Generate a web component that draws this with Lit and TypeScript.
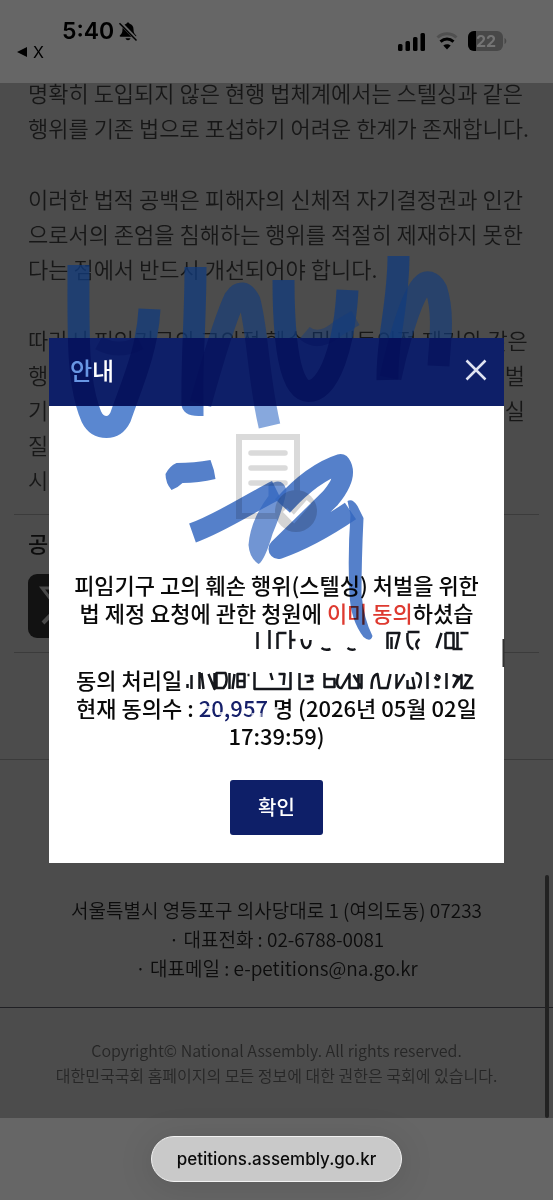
import { LitElement, html, svg, css } from "lit";
import { customElement } from "lit/decorators.js";

const ICON_BELL = svg`
  <path d="M10 1.500c-.9 0-1.500.6-1.500 1.300C5.800 3.500 4.500 5.500 4.500 8.200c0 3.300-1 4.600-2.500 6-.6.600-.3 1.500.6 1.500h14.800c.9 0 1.200-.9.600-1.500-1.500-1.400-2.500-2.700-2.500-6 0-2.700-1.300-4.700-4-5.400 0-.7-.6-1.300-1.500-1.300z"/>
  <path d="M7.500 17.200h5c-.3 1.300-1.300 2-2.500 2s-2.200-.7-2.500-2z"/>
  <path d="M2 1.500 19 19" stroke="#666" stroke-width="3.600"/>
  <path d="M1.500 2.200 18.500 19.500" stroke="#000" stroke-width="1.500"/>`;

@customElement("status-bar")
class StatusBar extends LitElement {
  static styles = css`
    :host {
      display: flex;
      justify-content: space-between;
      height: 83px;
      box-sizing: border-box;
      padding: 17px 45px 0 17px;
      background: #666;
      color: #000;
      font-family: Inter, "Noto Sans", sans-serif;
    }
    .clock {
      display: flex;
      align-items: center;
      gap: 4px;
      padding-left: 45px;
      font-size: 23px;
      line-height: 28px;
      font-weight: 600;
    }
    .back {
      display: flex;
      align-items: center;
      gap: 6px;
      font-size: 16px;
      line-height: 14px;
      color: inherit;
      text-decoration: none;
    }
    .right {
      display: flex;
      align-items: center;
      gap: 10px;
      height: 48px;
    }
  `;
  render() {
    return html`
      <div>
        <div class="clock">
          <span>5:40</span>
          <svg width="20" height="21" viewBox="0 0 20 21" aria-label="무음">${ICON_BELL}</svg>
        </div>
        <a class="back" href="#">
          <svg width="10" height="10" viewBox="0 0 10 10"><path d="M0 5 10 0v10z" /></svg>
          <span>X</span>
        </a>
      </div>
      <div class="right">
        <svg width="28" height="19" viewBox="0 0 28 19">
          <rect x="0" y="12" width="4.500" height="7" rx="1.500" />
          <rect x="7.500" y="9" width="4.500" height="10" rx="1.500" />
          <rect x="15" y="5" width="4.500" height="14" rx="1.500" />
          <rect x="22.500" y="1" width="4.500" height="18" rx="1.500" />
        </svg>
        <svg width="22" height="18" viewBox="0 0 22 18" fill="none">
          <path d="M1.500 5.500C7 .5 15 .5 20.500 5.500" stroke="#505050" stroke-width="3" />
          <path d="M4.500 9.700c4-3.500 9-3.500 13 0" stroke="#000" stroke-width="3" />
          <path d="M11 17.500 7.300 13.600c2.200-1.900 5.200-1.900 7.400 0z" fill="#000" />
        </svg>
        <svg width="40" height="20" viewBox="0 0 40 20">
          <rect width="35" height="20" rx="6" fill="#484848" />
          <path d="M8 0H6a6 6 0 0 0-6 6v8a6 6 0 0 0 6 6h2z" />
          <path d="M36.500 7c2.400 1 2.400 5 0 6z" fill="#484848" />
          <text x="18" y="16" font-size="16" font-weight="700" fill="#747474" text-anchor="middle">22</text>
        </svg>
      </div>
    `;
  }
}

@customElement("petition-page")
class PetitionPage extends LitElement {
  static styles = css`
    :host {
      display: block;
      overflow: hidden;
      background: #4c4c4c;
      color: #171717;
      font-weight: 350;
    }
    .article {
      margin: -8px 14px 0;
      padding: 0 14px 17px;
      border-bottom: 1px solid #3b3b3b;
      font-size: 22px;
      line-height: 35px;
      white-space: nowrap;
    }
    p {
      margin: 0 0 36px;
    }
    p:last-child {
      margin: 0;
    }
    .line {
      display: flex;
      justify-content: space-between;
    }
    .share {
      margin: 0 14px;
      padding: 11px 14px 14px;
      border-bottom: 1px solid #3b3b3b;
    }
    h2 {
      margin: 0 0 16px;
      font-size: 22px;
      line-height: 32px;
      font-weight: 500;
      color: #0c0c0c;
    }
    .x {
      display: block;
      width: 64px;
      height: 64px;
      padding: 0;
      border: 0;
      border-radius: 9px;
      background: #121212;
    }
    .contact {
      margin-top: 106px;
      padding: 135px 0 25px;
      border-top: 1px solid #3b3b3b;
      border-bottom: 1px solid #202024;
      font-size: 19px;
      line-height: 29px;
      text-align: center;
      color: #0c0c0c;
      font-style: normal;
    }
    .contact a {
      color: inherit;
      text-decoration: none;
    }
    .copy {
      padding: 30px 0;
      font-size: 16px;
      line-height: 25px;
      text-align: center;
      color: #262626;
    }
  `;
  render() {
    return html`
      <article class="article">
        <p>명확히 도입되지 않은 현행 법체계에서는 스텔싱과 같은<br />행위를 기존 법으로 포섭하기 어려운 한계가 존재합니다.</p>
        <p>이러한 법적 공백은 피해자의 신체적 자기결정권과 인간<br />으로서의 존엄을 침해하는 행위를 적절히 제재하지 못한<br />다는 점에서 반드시 개선되어야 합니다.</p>
        <p>
          따라서 피임기구의 고의적 훼손 및 비동의적 제거와 같은
          <span class="line"><span>행</span><span>벌</span></span>
          <span class="line"><span>기</span><span>실</span></span>
          <span class="line">질</span>
          <span class="line">시</span>
        </p>
      </article>
      <section class="share">
        <h2>공</h2>
        <button class="x" aria-label="X">
          <svg width="64" height="64" viewBox="0 0 64 64" fill="none" stroke="#4a4a4a">
            <path d="M14 14h9l27 35h-9z" stroke-width="3" />
            <path d="M49 14 15 49" stroke-width="4" />
          </svg>
        </button>
      </section>
      <address class="contact">
        서울특별시 영등포구 의사당대로 1 (여의도동) 07233<br />
        · 대표전화 : 02-6788-0081<br />
        · 대표메일 : <a href="mailto:e-petitions@na.go.kr">e-petitions@na.go.kr</a>
      </address>
      <div class="copy">
        Copyright© National Assembly. All rights reserved.<br />
        대한민국국회 홈페이지의 모든 정보에 대한 권한은 국회에 있습니다.
      </div>
    `;
  }
}

@customElement("notice-dialog")
class NoticeDialog extends LitElement {
  static styles = css`
    :host {
      display: block;
      background: #fff;
      color: #0a0a0a;
    }
    header {
      display: flex;
      align-items: center;
      justify-content: space-between;
      box-sizing: border-box;
      height: 68px;
      padding: 0 17px 3px 21px;
      background: #0e1f68;
      color: #fff;
    }
    h1 {
      margin: 0;
      font-size: 24px;
      line-height: 32px;
      font-weight: 500;
    }
    button {
      font: inherit;
      border: 0;
      padding: 0;
    }
    .close {
      display: grid;
      background: none;
    }
    .body {
      display: flex;
      flex-direction: column;
      align-items: center;
      padding: 28px 0;
      font-size: 22px;
      line-height: 28px;
      font-weight: 500;
      text-align: center;
      white-space: nowrap;
    }
    .doc {
      margin-bottom: 36px;
    }
    p {
      margin: 0;
    }
    .dates {
      margin: 39px 0 31px;
    }
    .left {
      display: block;
      text-align: left;
    }
    em {
      font-style: normal;
      color: #de3a30;
    }
    .count {
      color: #16206a;
    }
    .ok {
      width: 93px;
      height: 55px;
      border-radius: 3px;
      background: #0e1f68;
      color: #fff;
      font-size: 20px;
    }
  `;
  render() {
    return html`
      <header>
        <h1>안내</h1>
        <button class="close" aria-label="닫기">
          <svg width="22" height="22" viewBox="0 0 22 22" stroke="#dfe3f2" stroke-width="2.500">
            <path d="M1.500 1.500l19 19M20.500 1.500l-19 19" />
          </svg>
        </button>
      </header>
      <div class="body">
        <svg class="doc" width="82" height="100" viewBox="0 0 82 100" fill="none" stroke="#dadada">
          <path d="M61 57V3H3v79h38" stroke-width="6" />
          <path d="M15 19h34M15 34h34M15 49h34" stroke-width="5.500" stroke-linecap="round" />
          <circle cx="60" cy="77" r="21" fill="#d4d4d4" stroke="none" />
          <path d="M49 76l9 9 15-17" stroke="#fff" stroke-width="6" />
        </svg>
        <p>피임기구 고의 훼손 행위(스텔싱) 처벌을 위한<br />법 제정 요청에 관한 청원에 <em>이미 동의</em>하셨습</p>
        <p class="dates">
          <span class="left">동의 처리일</span>
          현재 동의수 : <span class="count">20,957</span> 명 (2026년 05월 02일<br />17:39:59)
        </p>
        <button class="ok">확인</button>
      </div>
    `;
  }
}

/* Freehand marker strokes and smudged lines laid over the whole screen. */
@customElement("marker-layer")
class MarkerLayer extends LitElement {
  static styles = css`
    :host {
      display: contents;
    }
    svg {
      position: absolute;
      top: 0;
      left: 50%;
      transform: translateX(-50%);
      pointer-events: none;
      fill: none;
      stroke-linejoin: round;
    }
    .ink {
      mix-blend-mode: multiply;
    }
  `;
  render() {
    const upper = svg`
      <path d="M78 265C78 330 76 382 91 417Q96 427 106 427Q115 427 120 417C131 385 147 350 149 309"/>
      <path d="M98 343Q118 354 140 343" stroke-width="14" opacity=".5"/>
      <path d="M195 267C195 320 191 360 192 404Q193 405 203 405"/>
      <path d="M200 404C210 368 222 325 234 299Q242 287 249 301C257 330 258 380 269 426" stroke-opacity=".62"/>
      <path d="M283 280C283 340 289 391 308 391C329 391 344 345 347 290"/>
      <path d="M304 333Q318 345 338 328L355 318" stroke-width="16" opacity=".6"/>
      <path d="M398 256C398 305 386 340 387 380"/>
      <path d="M390 378C397 345 410 299 421 286Q429 277 436 290C444 315 439 345 438 366" stroke-opacity=".62"/>`;
    return html`
      <svg width="553" height="1200" viewBox="0 0 553 1200">
        <defs>
          <clipPath id="back"><path d="M0 0h553v338H0z" /></clipPath>
        </defs>
        <g clip-path="url(#back)" stroke="#123b7e" stroke-opacity=".74" stroke-width="22">${upper}</g>
        <g fill="#fff" opacity=".75">
          <path d="M192 699h3v22h-3zM204 706h8v3h-8zM218 712h7v3h-7zM251 713h10v8h-10zM274 707h4v6h-4z" />
        </g>
        <g stroke="#15171c" stroke-width="2.500">
          <path d="M257 632v17M269 630v19M277 633v16M277 633h9M290 630v19M290 640h5M301 639q1 9 5 9 4-1 4-8M321 648q4 3 9 1M347 648q4 3 8 1" />
          <path d="M387 649v-16h12l-4 16M391 637v12M407 632h12M407 633q-1 15 6 16M419 639q-6 5-1 10M436 648l5-15M445 633v15h8v-15h-8M457 632v18M452 649h10M460 633h8" />
          <path d="M187 684v4M191 675v14M199 672v17M203 689l-2-16M208 674l6 15v-16M216 673h9q3 10-2 15h-7zM229 673v16M234 674l-2 15M237 674h7v13h-7zM237 681h6M247 675h2M254 672v17h36v-17M270 673l2 7M278 674h6l-1 11" />
          <path d="M299 673v16h14M304 676h9M306 682l6-1-2-6M324 673v14h10v-8h-10M338 674q-4 14 3 14l8-14v14h9v-14M353 675l8 13v-14M371 689q0-14 6-15l2 14h8l3-14M396 674v14l8-14M407 680v8h7l-2-11M415 673q9 1 3 15M427 672v17M435 675q7 1 2 5l-3-3M434 687h5M446 673v16M452 675l6 2-5 10 8-12v14M464 675l7 1-8 12h10" />
          <path d="M503 639v28" stroke="#333" stroke-width="2" />
        </g>
      </svg>
      <svg class="ink" width="553" height="1200" viewBox="0 0 553 1200">
        <defs>
          <clipPath id="head"><path d="M0 338h553v68H0z" /></clipPath>
          <clipPath id="front"><path d="M0 406h553v794H0z" /></clipPath>
        </defs>
        <g clip-path="url(#head)" stroke="#3d78dc" stroke-opacity=".78" stroke-width="22">${upper}</g>
        <g clip-path="url(#front)" stroke="#3d72c8" stroke-opacity=".85" stroke-width="22">${upper}</g>
        <g stroke="#3468c0" stroke-opacity=".84" stroke-width="20">
          <path d="M165 474q4-8 11-11 18 0 34-3 4 10 5 19-17 4-33 4-5 5-11 7-6-7-6-16z" fill="#3468c0" fill-opacity=".84" stroke="none" />
          <path d="M192 533C220 523 248 504 276 490" />
          <path d="M268 485Q282 476 286 490Q284 505 272 534Q264 561 258 564Q249 558 248 545Q250 520 268 496z" fill="#3468c0" fill-opacity=".7" stroke="none" />
          <path d="M282 506C300 486 318 471 340 464Q348 476 330 498L278 549Q310 538 350 511" />
          <path d="M347 501Q352 498 357 506L363 518Q361 560 361 594Q363 618 372 636Q370 643 363 637Q350 620 349 594Q347 555 350 515z" fill="#3468c0" fill-opacity=".84" stroke="none" />
        </g>
      </svg>
    `;
  }
}

@customElement("app-root")
class AppRoot extends LitElement {
  static styles = css`
    :host {
      display: flex;
      flex-direction: column;
      position: relative;
      isolation: isolate;
      min-height: 100vh;
      overflow: hidden;
      background: #666;
      font-family: "Noto Sans CJK KR", sans-serif;
    }
    .overlay {
      position: absolute;
      inset: 0;
      display: grid;
      align-content: center;
      padding: 0 49px;
    }
    .scroll {
      position: absolute;
      right: 4px;
      top: 875px;
      width: 4px;
      height: 243px;
      border-radius: 2px;
      background: #222;
    }
    .bottom {
      display: grid;
      place-items: center;
      padding: 18px 0;
    }
    .url {
      height: 46px;
      padding: 0 25px;
      border: 1px solid #f2f2f2;
      border-radius: 23px;
      background: #c9c9c9;
      color: #0a0a0a;
      box-shadow: 0 4px 36px rgba(0, 0, 0, 0.12);
      font: 500 17px Inter, sans-serif;
    }
  `;
  render() {
    return html`
      <status-bar></status-bar>
      <petition-page></petition-page>
      <div class="bottom"><button class="url">petitions.assembly.go.kr</button></div>
      <div class="scroll"></div>
      <div class="overlay"><notice-dialog role="dialog" aria-label="안내"></notice-dialog></div>
      <marker-layer></marker-layer>
    `;
  }
}
